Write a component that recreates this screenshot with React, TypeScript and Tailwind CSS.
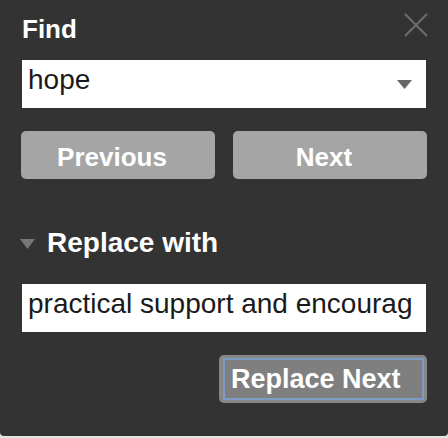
const font = { fontFamily: '"Liberation Sans", Arial, sans-serif' };

function CloseIcon() {
  return (
    <svg width="24" height="24" viewBox="0 0 24 24" className="mt-[13px] -mr-[2px]">
      <path d="M1 1 L23 23 M23 1 L1 23" stroke="#6b6b6b" strokeWidth="2.2" fill="none" />
    </svg>
  );
}

export default function App() {
  return (
    <div className="h-[438px] w-[448px] bg-[#e4e4e4]" style={font}>
      <div className="flex h-[436px] flex-col rounded-b-[4px] bg-[#333333] px-[22px]">
        <div className="flex items-start justify-between">
          <h1 className="mt-[14px] text-[26px] font-bold leading-[30px] text-white">Find</h1>
          <CloseIcon />
        </div>

        <div className="mt-[16px] flex h-[48px] items-start bg-white pl-[6px] pr-[14px]">
          <span className="flex-1 pt-[4px] text-[28px] leading-[32px] text-[#1a1a1a]">hope</span>
          <svg width="15" height="9" viewBox="0 0 15 9" className="mt-[20px]">
            <path d="M0 0 L15 0 L7.5 9 Z" fill="#666666" />
          </svg>
        </div>

        <div className="mt-[23px] -ml-[1px] -mr-[1px] grid grid-cols-2 gap-[18px]">
          <button className="flex h-[48px] items-center justify-center rounded-[5px] bg-[#a5a5a5] pr-[12px] pt-[4px] text-[26px] font-bold leading-[30px] text-white">
            Previous
          </button>
          <button className="flex h-[48px] items-center justify-center rounded-[5px] bg-[#a5a5a5] pr-[12px] pt-[4px] text-[26px] font-bold leading-[30px] text-white">
            Next
          </button>
        </div>

        <div className="mt-[48px] flex items-center gap-[12px] -ml-[2px]">
          <svg width="15" height="10" viewBox="0 0 15 10" className="mt-[2px]">
            <path d="M0 0 L15 0 L7.5 10 Z" fill="#777777" />
          </svg>
          <span className="text-[28px] font-bold leading-[32px] text-white">Replace with</span>
        </div>

        <div className="mt-[25px] h-[48px] whitespace-nowrap bg-white pl-[6px] pr-[4px]">
          <span className="block pt-[4px] text-[28px] leading-[32px] text-[#1a1a1a]">
            practical support and encourag
          </span>
        </div>

        <div className="mt-[23px] flex justify-end -mr-[1px]">
          <button className="h-[48px] w-[208px] rounded-[5px] bg-[#878787] py-[3px] pl-[4px] pr-[3px]">
            <span className="flex h-full items-center border-2 border-[#7c9cc6] bg-[#7f7f7f] pl-[6px] text-[27px] font-bold leading-[30px] text-white">
              Replace Next
            </span>
          </button>
        </div>
      </div>
    </div>
  );
}
